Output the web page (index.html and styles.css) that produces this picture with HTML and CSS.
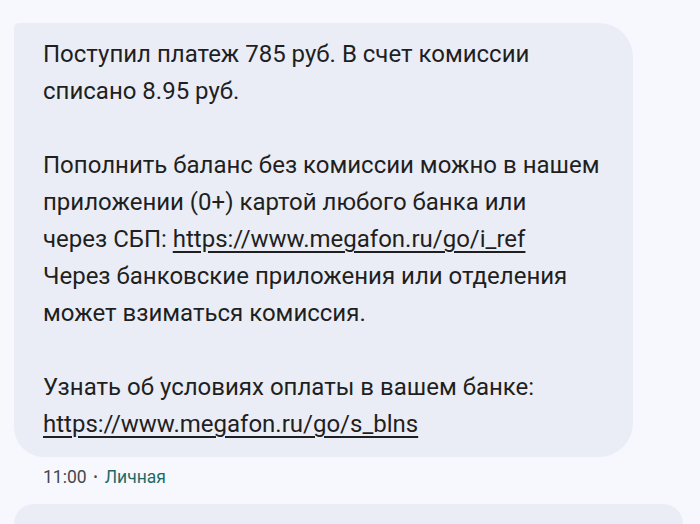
FILE: index.html
```html
<!DOCTYPE html>
<html lang="ru">
<head>
<meta charset="utf-8">
<link rel="stylesheet" href="styles.css">
</head>
<body>
<div class="thread">
  <div class="bubble">
    <p>Поступил платеж 785 руб. В счет комиссии<br>списано 8.95 руб.</p>
    <p>Пополнить баланс без комиссии можно в нашем<br>приложении (0+) картой любого банка или<br>через СБП: <a class="link" href="#">https://www.megafon.ru/go/i_ref</a><br>Через банковские приложения или отделения<br>может взиматься комиссия.</p>
    <p>Узнать об условиях оплаты в вашем банке:<br><a class="link" href="#">https://www.megafon.ru/go/s_blns</a></p>
  </div>
  <div class="meta"><span class="time">11:00</span><span class="dot">•</span><span class="label">Личная</span></div>
  <div class="bubble next"></div>
</div>
</body>
</html>
```
FILE: styles.css
```css
html, body {
  margin: 0;
  padding: 0;
  background: #f7f8fd;
  height: 100%;
  overflow: hidden;
}
.thread {
  padding: 23px 0 0 14px;
  font-family: Roboto, "Noto Sans", sans-serif;
}
.bubble {
  width: 619px;
  box-sizing: border-box;
  background: #eaedf6;
  border-radius: 5px 34px 34px 30px;
  padding: 13px 20px 14px 29px;
  font-size: 24px;
  line-height: 37px;
  color: #1f1f1f;
}
.bubble p {
  margin: 0 0 37px 0;
}
.bubble p:last-child {
  margin-bottom: 0;
}
.link {
  color: #1f1f1f;
  text-decoration: underline;
  text-decoration-thickness: 2px;
  text-underline-offset: 4px;
}
.meta {
  margin: 9px 0 0 29px;
  font-size: 17.5px;
  line-height: 22px;
  color: #44474e;
  display: flex;
  align-items: center;
  gap: 7px;
}
.dot {
  font-size: 12px;
}
.label {
  color: #1d6b66;
}
.bubble.next {
  margin-top: 16px;
  width: 669px;
  height: 20px;
  padding: 0;
  border-radius: 34px 34px 0 0;
}
```
